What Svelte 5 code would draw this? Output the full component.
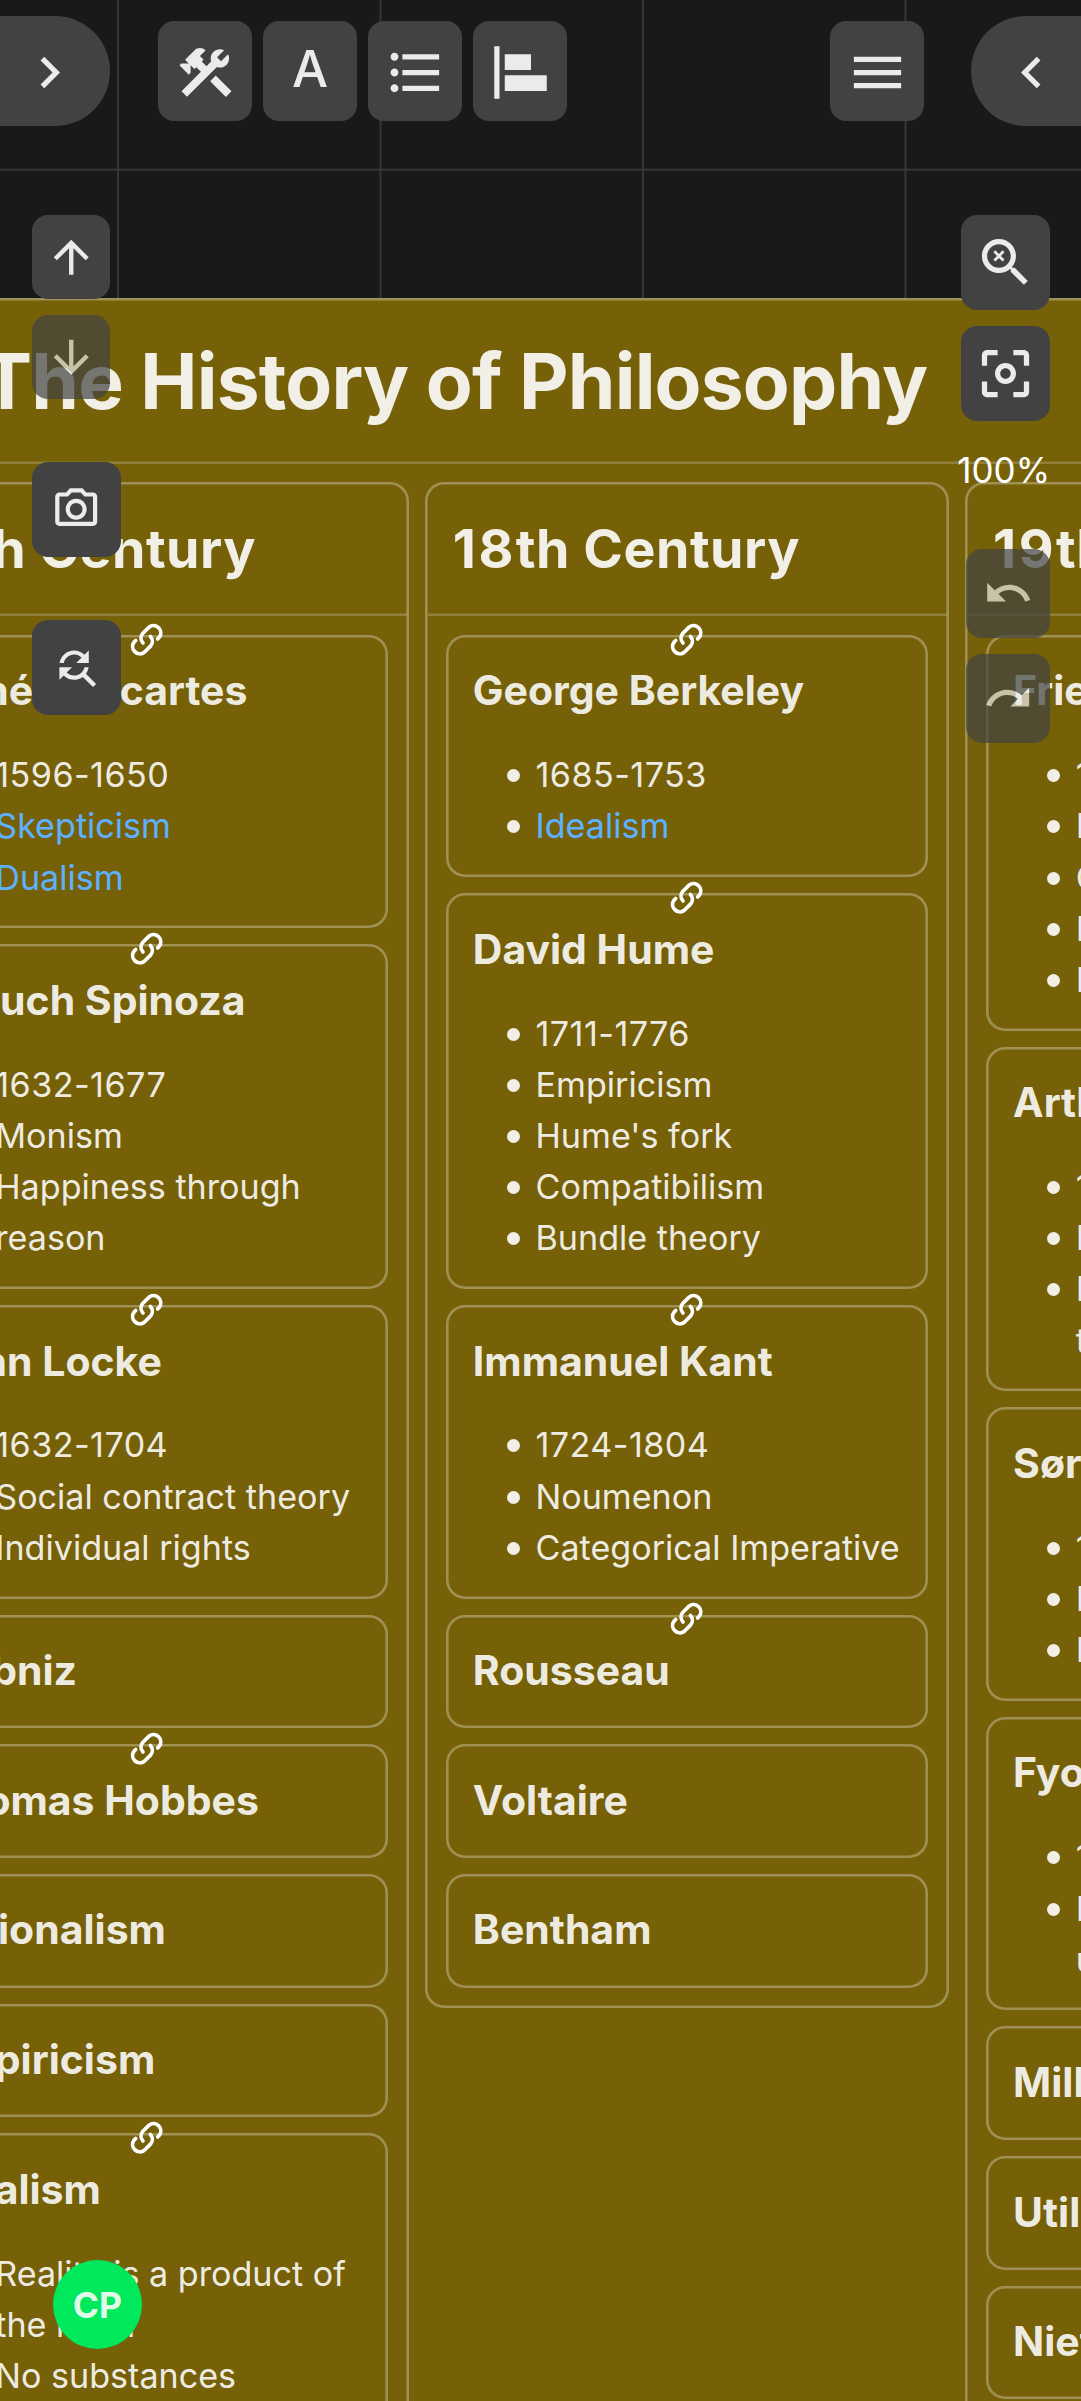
<script lang="ts">
  type Item = { text: string; link?: boolean; years?: boolean };
  type Card = { name: string; linked?: boolean; items?: Item[] };
  type Column = { century: number; cards: Card[] };

  const y = (text: string): Item => ({ text, years: true });
  const t = (text: string): Item => ({ text });
  const l = (text: string): Item => ({ text, link: true });

  const columns: Column[] = [
    {
      century: 17,
      cards: [
        { name: 'René Descartes', linked: true, items: [y('1596-1650'), l('Skepticism'), l('Dualism')] },
        { name: 'Baruch Spinoza', linked: true, items: [y('1632-1677'), t('Monism'), t('Happiness through\nreason')] },
        { name: 'John Locke', linked: true, items: [y('1632-1704'), t('Social contract theory'), t('Individual rights')] },
        { name: 'Leibniz' },
        { name: 'Thomas Hobbes', linked: true },
        { name: 'Rationalism' },
        { name: 'Empiricism' },
        { name: 'Idealism', linked: true, items: [t('Reality is a product of\nthe mind'), t('No substances\noutside of minds')] }
      ]
    },
    {
      century: 18,
      cards: [
        { name: 'George Berkeley', linked: true, items: [y('1685-1753'), l('Idealism')] },
        { name: 'David Hume', linked: true, items: [y('1711-1776'), t('Empiricism'), t("Hume's fork"), t('Compatibilism'), t('Bundle theory')] },
        { name: 'Immanuel Kant', linked: true, items: [y('1724-1804'), t('Noumenon'), t('Categorical Imperative')] },
        { name: 'Rousseau', linked: true },
        { name: 'Voltaire' },
        { name: 'Bentham' }
      ]
    },
    {
      century: 19,
      cards: [
        { name: 'Friedrich Nietzsche', linked: true, items: [y('1844-1900'), t('Nihilism'), t('God is dead'), t('Perspectivism'), t('Eternal recurrence')] },
        { name: 'Arthur Schopenhauer', linked: true, items: [y('1788-1860'), t('Pessimism'), t('Denial of the will\nto live')] },
        { name: 'Søren Kierkegaard', linked: true, items: [y('1813-1855'), t('Existentialism'), t('Leap of faith')] },
        { name: 'Fyodor Dostoevsky', linked: true, items: [y('1821-1881'), t('Notes from\nunderground')] },
        { name: 'Mill' },
        { name: 'Utilitarianism' },
        { name: 'Nietzsche' }
      ]
    }
  ];

  const icons = {
    right: 'M10 6 8.59 7.41 13.17 12l-4.58 4.59L10 18l6-6z',
    left: 'M15.41 7.41 14 6l-6 6 6 6 1.41-1.41L10.83 12z',
    tools:
      'M13.78 15.3L19.78 21.3L21.89 19.14L15.89 13.14L13.78 15.3M17.5 10.1C17.11 10.1 16.69 10.05 16.36 9.91L4.97 21.25L2.86 19.14L10.27 11.74L8.5 9.96L7.78 10.66L6.33 9.25V12.11L5.63 12.81L2.11 9.25L2.81 8.55H5.62L4.22 7.14L7.78 3.58C8.95 2.41 10.83 2.41 12 3.58L9.89 5.74L11.3 7.14L10.59 7.85L12.38 9.63L14.2 7.75C14.06 7.42 14 7 14 6.63C14 4.66 15.56 3.11 17.5 3.11C18.09 3.11 18.61 3.25 19.08 3.53L16.41 6.2L17.91 7.7L20.58 5.03C20.86 5.5 21 6 21 6.63C21 8.55 19.45 10.1 17.5 10.1Z',
    list: 'M4 10.5c-.83 0-1.5.67-1.5 1.5s.67 1.5 1.5 1.5 1.5-.67 1.5-1.5-.67-1.5-1.5-1.5zm0-6c-.83 0-1.5.67-1.5 1.5S3.17 7.5 4 7.5 5.5 6.83 5.5 6 4.83 4.5 4 4.5zm0 12c-.83 0-1.5.68-1.5 1.5s.68 1.5 1.5 1.5 1.5-.68 1.5-1.5-.67-1.5-1.5-1.5zM7 19h14v-2H7v2zm0-6h14v-2H7v2zm0-8v2h14V5H7z',
    align: 'M2 2h2v20H2zM6 5h10v6H6zM6 13h16v6H6z',
    menu: 'M3 18h18v-2H3v2zm0-5h18v-2H3v2zm0-7v2h18V6H3z',
    up: 'm4 12 1.41 1.41L11 7.83V20h2V7.83l5.58 5.59L20 12l-8-8-8 8z',
    down: 'm20 12-1.41-1.41L13 16.17V4h-2v12.17l-5.58-5.59L4 12l8 8 8-8z',
    camera:
      'M14.12 4l1.83 2H20v12H4V6h4.05l1.83-2h4.24M15 2H9L7.17 4H4c-1.1 0-2 .9-2 2v12c0 1.1.9 2 2 2h16c1.1 0 2-.9 2-2V6c0-1.1-.9-2-2-2h-3.17L15 2zm-3 7c1.65 0 3 1.35 3 3s-1.35 3-3 3-3-1.35-3-3 1.35-3 3-3m0-2c-2.76 0-5 2.24-5 5s2.24 5 5 5 5-2.24 5-5-2.24-5-5-5z',
    replace:
      'M11 6c1.38 0 2.63.56 3.54 1.46L12 10h6V4l-2.05 2.05C14.68 4.78 12.93 4 11 4c-3.53 0-6.43 2.61-6.92 6H6.1c.46-2.28 2.48-4 4.9-4zm5.64 9.14c.66-.9 1.12-1.97 1.28-3.14H15.9c-.46 2.28-2.48 4-4.9 4-1.38 0-2.63-.56-3.54-1.46L10 12H4v6l2.05-2.05C7.32 17.22 9.07 18 11 18c1.55 0 2.98-.51 4.14-1.36L20 21.49 21.49 20l-4.85-4.86z',
    zoom: 'M15.5 14h-.79l-.28-.27C15.41 12.59 16 11.11 16 9.5 16 5.91 13.09 3 9.5 3S3 5.91 3 9.5 5.91 16 9.5 16c1.61 0 3.09-.59 4.23-1.57l.27.28v.79l5 4.99L20.49 19l-4.99-5zm-6 0C7.01 14 5 11.99 5 9.5S7.01 5 9.5 5 14 7.01 14 9.5 11.99 14 9.5 14zM7.38 8.12l.74-.74 1.38 1.38 1.38-1.38.74.74L10.24 9.5l1.38 1.38-.74.74L9.5 10.24l-1.38 1.38-.74-.74L8.76 9.5z',
    focus:
      'M5 15H3v4c0 1.1.9 2 2 2h4v-2H5v-4zM5 5h4V3H5c-1.1 0-2 .9-2 2v4h2V5zm14-2h-4v2h4v4h2V5c0-1.1-.9-2-2-2zm0 16h-4v2h4c1.1 0 2-.9 2-2v-4h-2v4zM12 8c-2.21 0-4 1.79-4 4s1.79 4 4 4 4-1.79 4-4-1.79-4-4-4zm0 6c-1.1 0-2-.9-2-2s.9-2 2-2 2 .9 2 2-.9 2-2 2z',
    undo: 'M12.5 8c-2.65 0-5.05.99-6.9 2.6L2 7v9h9l-3.62-3.62c1.39-1.16 3.16-1.88 5.12-1.88 3.54 0 6.55 2.31 7.6 5.5l2.37-.78C21.08 11.03 17.15 8 12.5 8z',
    redo: 'M18.4 10.6C16.55 8.99 14.15 8 11.5 8c-4.65 0-8.58 3.03-9.96 7.22L3.9 16c1.05-3.19 4.05-5.5 7.6-5.5 1.95 0 3.73.72 5.12 1.88L13 16h9V7l-3.6 3.6z'
  };
</script>

{#snippet icon(name: keyof typeof icons)}
  <svg class="icon" viewBox="0 0 24 24" aria-hidden="true"><path d={icons[name]} /></svg>
{/snippet}

<div class="app">
  <main class="canvas">
    <section class="panel">
      <h1>The History of Philosophy</h1>
      <div class="columns">
        {#each columns as column}
          <section class="column">
            <h2><span class="number">{column.century}</span>th Century</h2>
            <div class="cards">
              {#each column.cards as card}
                <article class="card">
                  {#if card.linked}
                    <svg class="chain" viewBox="1.2 1.2 21.6 21.6" aria-hidden="true">
                      <path d="M9.6 14.1a4.6 4.6 0 0 1-.2-6.1l4.1-4.1a4.7 4.7 0 0 1 6.6 6.6l-1 1" />
                      <path d="M14.4 9.9a4.6 4.6 0 0 1 .2 6.1l-4.1 4.1a4.7 4.7 0 0 1-6.6-6.6l1-1" />
                    </svg>
                  {/if}
                  <h3>{card.name}</h3>
                  {#if card.items}
                    <ul>
                      {#each card.items as item}
                        <li class:years={item.years} class:ref={item.link}>{item.text}</li>
                      {/each}
                    </ul>
                  {/if}
                </article>
              {/each}
            </div>
          </section>
        {/each}
      </div>
    </section>
  </main>

  <nav class="topbar">
    <button class="pill pill-left">{@render icon('right')}</button>
    <div class="tools">
      <button>{@render icon('tools')}</button>
      <button><span class="letter">A</span></button>
      <button>{@render icon('list')}</button>
      <button>{@render icon('align')}</button>
    </div>
    <button class="menu">{@render icon('menu')}</button>
    <button class="pill pill-right">{@render icon('left')}</button>
  </nav>

  <aside class="rail rail-left">
    <button class="arrow">{@render icon('up')}</button>
    <button class="arrow faded">{@render icon('down')}</button>
    <button class="shot">{@render icon('camera')}</button>
    <button class="find">{@render icon('replace')}</button>
  </aside>

  <aside class="rail rail-right">
    <button class="view">{@render icon('zoom')}</button>
    <button class="view second">{@render icon('focus')}</button>
    <span class="percent">100%</span>
    <button class="history faded">{@render icon('undo')}</button>
    <button class="history faded">{@render icon('redo')}</button>
  </aside>

  <div class="avatar">CP</div>
</div>

<style>
  :global(body) {
    background: #191919;
  }

  .app {
    --line: rgba(255, 255, 255, 0.3);
    --divider: rgba(255, 255, 255, 0.2);
    --bw: 2.6px;
    position: relative;
    width: 1081px;
    height: 2401px;
    overflow: hidden;
    font-family: Inter, 'Liberation Sans', sans-serif;
    font-optical-sizing: none;
    background-color: #191919;
    background-image: linear-gradient(90deg, #363636 1.6px, transparent 1.6px),
      linear-gradient(#363636 1.6px, transparent 1.6px);
    background-size: 262.5px 262.5px;
    background-position: 117px 168.7px;
  }

  .canvas {
    display: flow-root;
    color: rgba(255, 255, 255, 0.9);
    font-size: 34.125px;
    line-height: 51.19px;
  }

  .panel {
    width: 1800px;
    height: 2400px;
    margin: 298px 0 0 -262.5px;
    padding-top: var(--bw);
    box-sizing: border-box;
    background: #766109;
    box-shadow: inset 0 var(--bw) var(--line);
  }

  h1,
  h2,
  h3 {
    margin: 0;
    font-weight: 700;
    white-space: nowrap;
  }

  h1 {
    box-sizing: border-box;
    height: 163px;
    padding-left: 243.5px;
    font-size: 76.6px;
    line-height: 161.6px;
    letter-spacing: -0.8px;
    font-optical-sizing: auto;
    box-shadow: inset 0 calc(-1 * var(--bw)) var(--divider);
  }

  .columns {
    display: flex;
    align-items: flex-start;
    gap: 16px;
    padding: 18.1px 0 0 147.4px;
  }

  .column {
    flex: none;
    width: 524.25px;
    padding: var(--bw);
    box-sizing: border-box;
    border-radius: 19px;
    box-shadow: inset 0 0 0 var(--bw) var(--line);
  }

  h2 {
    box-sizing: border-box;
    height: 132px;
    padding-left: 25px;
    font-size: 53.7px;
    line-height: 130.6px;
    letter-spacing: 0.5px;
    box-shadow: inset 0 calc(-1 * var(--bw)) var(--divider);
  }

  .number {
    letter-spacing: 2.5px;
  }

  .cards {
    display: flex;
    flex-direction: column;
    gap: 16px;
    padding: 18.4px 18.5px 18.1px;
  }

  .card {
    position: relative;
    box-sizing: border-box;
    padding: 27.6px 26.6px 30.1px;
    border-radius: 19px;
    box-shadow: inset 0 0 0 var(--bw) var(--line);
  }

  .chain {
    position: absolute;
    left: 50%;
    top: -12.1px;
    width: 33.4px;
    height: 33.4px;
    margin-left: -17.5px;
    fill: none;
    stroke: #fff;
    stroke-width: 2.4;
    stroke-linecap: round;
  }

  h3 {
    font-size: 40.95px;
    line-height: 56px;
  }

  ul {
    margin: 30.9px 0 -4.6px;
    padding: 0 0 0 62.7px;
    list-style: none;
  }

  li {
    white-space: pre;
  }

  li::before {
    content: '';
    display: inline-block;
    width: 13px;
    height: 13px;
    margin: 0 15.6px 0 -28.6px;
    border-radius: 50%;
    background: rgba(255, 255, 255, 0.9);
    vertical-align: 5px;
  }

  .years {
    letter-spacing: 0.45px;
  }

  .ref {
    color: #5eb1ff;
  }

  .ref::before {
    background: rgba(255, 255, 255, 0.9);
  }

  button {
    display: flex;
    align-items: center;
    justify-content: center;
    flex: none;
    margin: 0;
    padding: 0;
    border: 0;
    border-radius: 16px;
    background: #424242;
    color: #ebebeb;
    font: inherit;
  }

  .icon {
    display: block;
    width: 63px;
    height: 63px;
    fill: currentColor;
  }

  .topbar {
    position: absolute;
    inset: 0 0 auto 0;
    height: 142px;
    display: flex;
    align-items: center;
  }

  .topbar .icon {
    margin-top: 2px;
  }

  .topbar button {
    width: 94px;
    height: 100px;
  }

  .topbar .pill {
    width: 110px;
    height: 110px;
  }

  .topbar .pill-left {
    border-radius: 0 55px 55px 0;
    padding-right: 11px;
    box-sizing: border-box;
  }

  .topbar .pill-right {
    margin-left: 47px;
    border-radius: 55px 0 0 55px;
    padding-left: 11px;
    box-sizing: border-box;
  }

  .tools {
    display: flex;
    gap: 11px;
    margin-left: 48px;
  }

  .menu {
    margin-left: auto;
  }

  .letter {
    font-size: 51px;
    font-weight: 500;
    line-height: 60px;
    margin-top: -5px;
  }

  .rail {
    position: absolute;
    top: 215px;
    display: flex;
    flex-direction: column;
  }

  .rail-left {
    left: 32px;
    align-items: flex-start;
  }

  .rail-right {
    right: 31px;
    align-items: flex-end;
  }

  .faded {
    opacity: 0.7;
  }

  .arrow {
    width: 78px;
    height: 84px;
    margin-bottom: 16px;
  }

  .arrow .icon {
    width: 52.5px;
    height: 52.5px;
  }

  .shot,
  .find {
    width: 89px;
    height: 95px;
  }

  .shot {
    margin-top: 47px;
    margin-bottom: 63px;
  }

  .shot .icon,
  .find .icon,
  .history .icon {
    width: 50.4px;
    height: 50.4px;
  }

  .view {
    width: 89px;
    height: 95px;
  }

  .second {
    margin-top: 16px;
  }

  .percent {
    height: 102px;
    margin: 27px 0 0 0;
    height: 102px;
    color: #fff;
    font-size: 35px;
    line-height: 45px;
  }

  .history {
    width: 84px;
    height: 89px;
    margin-bottom: 16px;
  }

  .percent + .history {
    margin-top: -1px;
  }

  .avatar {
    position: absolute;
    left: 53px;
    top: 2260px;
    width: 89px;
    height: 89px;
    border-radius: 50%;
    background: #00e85b;
    color: rgba(255, 255, 255, 0.9);
    font-size: 35.5px;
    font-weight: 700;
    line-height: 91px;
    text-align: center;
  }
</style>
